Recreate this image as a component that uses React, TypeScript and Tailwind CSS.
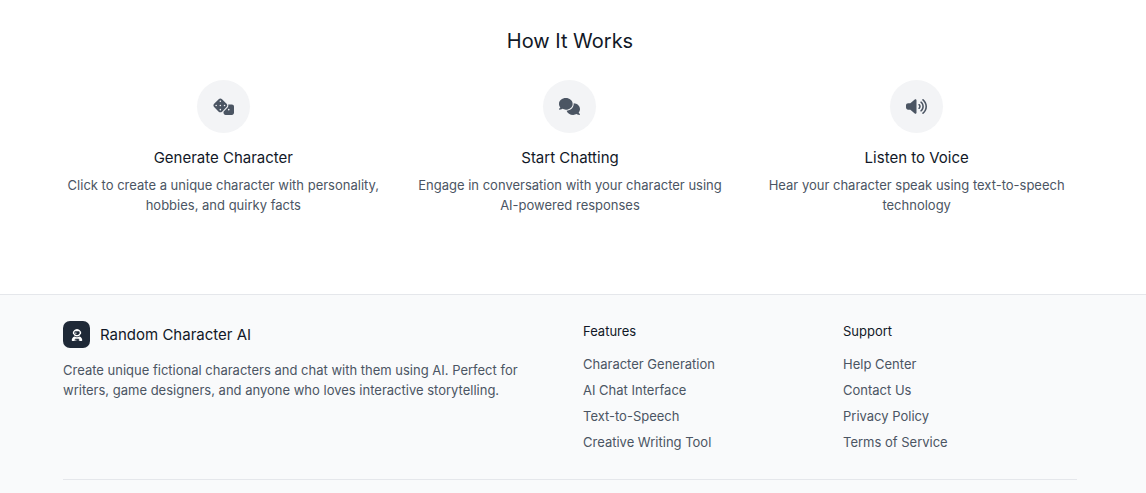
import React from "react";
import { FaDice, FaComments, FaVolumeHigh, FaUserAstronaut } from "react-icons/fa6";

const steps = [
  { icon: FaDice, title: "Generate Character", text: "Click to create a unique character with personality, hobbies, and quirky facts" },
  { icon: FaComments, title: "Start Chatting", text: "Engage in conversation with your character using AI-powered responses" },
  { icon: FaVolumeHigh, title: "Listen to Voice", text: "Hear your character speak using text-to-speech technology" },
];

const columns = [
  { title: "Features", links: ["Character Generation", "AI Chat Interface", "Text-to-Speech", "Creative Writing Tool"] },
  { title: "Support", links: ["Help Center", "Contact Us", "Privacy Policy", "Terms of Service"] },
];

export default function App() {
  return (
    <div className="min-h-screen bg-white font-['Inter',sans-serif] text-[#111827]">
      <section className="pt-7 pr-[69px] pb-[79px] pl-[63px]">
        <h2 className="text-center text-[20px] leading-[26px]">How It Works</h2>
        <div className="mt-[26px] grid grid-cols-3 gap-[26px]">
          {steps.map(({ icon: Icon, title, text }) => (
            <div key={title} className="text-center">
              <div className="mx-auto flex size-[53px] items-center justify-center rounded-full bg-[#f3f4f6] text-[#4b5563]">
                <Icon className="h-[17px] w-[21px]" />
              </div>
              <h3 className="mt-[13px] text-[15px] leading-6">{title}</h3>
              <p className="mt-[5px] text-[13px] leading-5 text-[#4b5563]">{text}</p>
            </div>
          ))}
        </div>
      </section>
      <footer className="border-t border-[#e5e7eb] bg-[#f9fafb] pt-[26px] pr-[69px] pb-6 pl-[63px]">
        <div className="grid grid-cols-4 gap-[26px]">
          <div className="col-span-2">
            <div className="flex items-center gap-[10px]">
              <div className="flex size-[27px] items-center justify-center rounded-[7px] bg-[#1f2937] text-white">
                <FaUserAstronaut className="size-3" />
              </div>
              <span className="text-[15px] leading-6">Random Character AI</span>
            </div>
            <p className="mt-3 text-[13px] leading-5 text-[#4b5563]">Create unique fictional characters and chat with them using AI. Perfect for writers, game designers, and anyone who loves interactive storytelling.</p>
          </div>
          {columns.map((c) => (
            <nav key={c.title} aria-label={c.title}>
              <h4 className="text-[13px] leading-5">{c.title}</h4>
              <ul className="mt-[13px] space-y-[6px] text-[13px] leading-5 text-[#4b5563]">
                {c.links.map((l) => (
                  <li key={l}><a href="#">{l}</a></li>
                ))}
              </ul>
            </nav>
          ))}
        </div>
        <div className="mt-[27px] border-t border-[#e5e7eb]" />
      </footer>
    </div>
  );
}
